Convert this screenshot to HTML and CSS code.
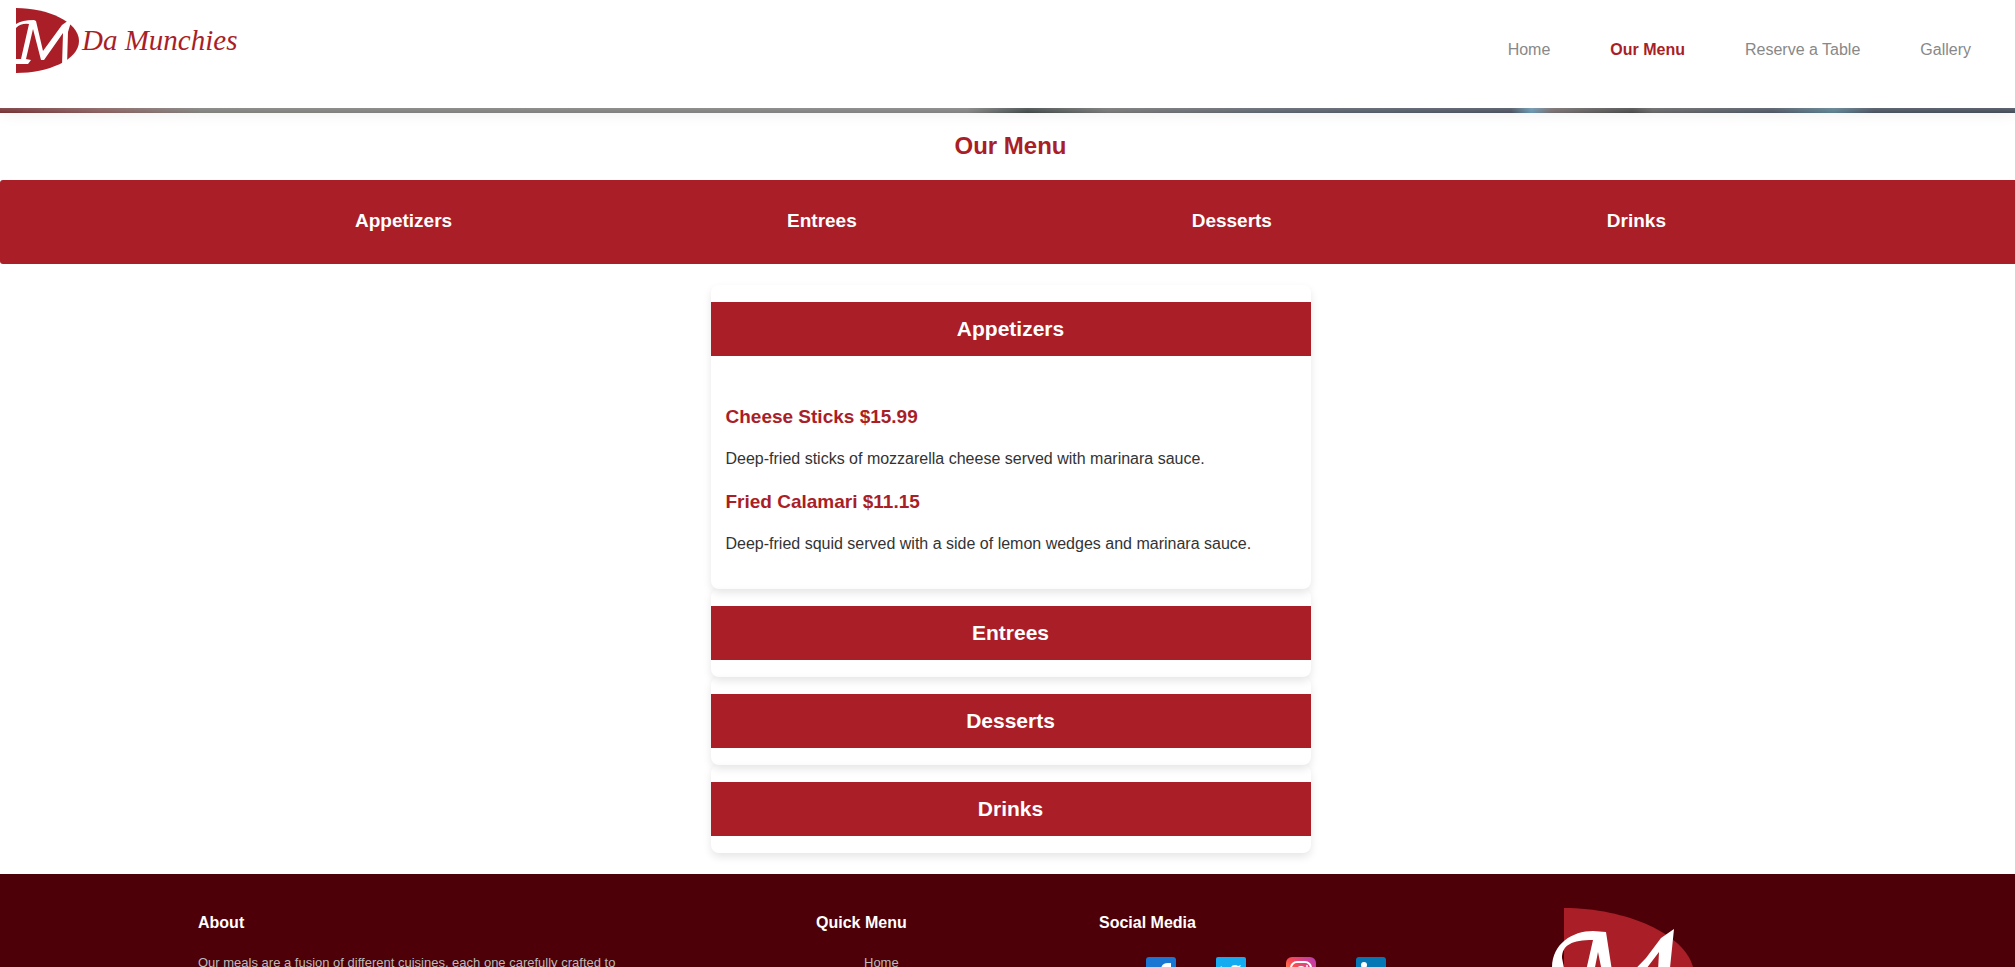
FILE: index.html
```html
<!DOCTYPE html>
<html lang="en">
<head>
<meta charset="utf-8">
<title>Da Munchies - Our Menu</title>
<link rel="stylesheet" href="styles.css">
</head>
<body>
<header class="site-header">
  <a class="brand" href="#" aria-label="Da Munchies home">
    <svg class="brand-mark" viewBox="0 0 66 68" aria-hidden="true">
      <path fill="#a91e27" d="M0 0C32 0 63 14 63 33S32 65 0 65Z"/>
      <path fill="#fff" d="M0 16Q6 12 18 12L20 13L27 43L46 17L53 12L55 14L52 24L51 58L46 58L47 25L28 52L25 52L17 21L10 51L15 52L12 56L0 56L0 51L5 51L13 16Q5 15 0 20Z"/>
    </svg>
    <span class="brand-name">Da Munchies</span>
  </a>
  <nav class="site-nav">
    <a href="#">Home</a>
    <a class="active" href="#">Our Menu</a>
    <a href="#">Reserve a Table</a>
    <a href="#">Gallery</a>
  </nav>
</header>
<div class="hero"></div>
<main class="page">
  <h1 class="page-title">Our Menu</h1>
  <nav class="menu-nav">
    <a href="#appetizers">Appetizers</a>
    <a href="#entrees">Entrees</a>
    <a href="#desserts">Desserts</a>
    <a href="#drinks">Drinks</a>
  </nav>
  <div class="cards">
    <section class="card" id="appetizers">
      <h2 class="card-title">Appetizers</h2>
      <div class="dishes">
        <article class="dish">
          <h3>Cheese Sticks $15.99</h3>
          <p>Deep-fried sticks of mozzarella cheese served with marinara sauce.</p>
        </article>
        <article class="dish">
          <h3>Fried Calamari $11.15</h3>
          <p>Deep-fried squid served with a side of lemon wedges and marinara sauce.</p>
        </article>
      </div>
    </section>
    <section class="card" id="entrees"><h2 class="card-title">Entrees</h2></section>
    <section class="card" id="desserts"><h2 class="card-title">Desserts</h2></section>
    <section class="card" id="drinks"><h2 class="card-title">Drinks</h2></section>
  </div>
</main>
<footer class="site-footer">
  <section class="about">
    <h4>About</h4>
    <p>Our meals are a fusion of different cuisines, each one carefully crafted to</p>
  </section>
  <section class="quick">
    <h4>Quick Menu</h4>
    <a href="#">Home</a>
  </section>
  <section class="social">
    <h4>Social Media</h4>
    <div class="social-links">
      <a href="#" aria-label="Facebook"><svg viewBox="0 0 30 30"><rect width="30" height="30" rx="3" fill="#1976d2"/><path fill="#fff" d="M25 6V11H23Q20 11 20 14V16H25L24 21H20V30H15V21H11V16H15V13Q15 6 22 6Z"/></svg></a>
      <a href="#" aria-label="Twitter"><svg viewBox="0 0 30 30"><rect width="30" height="30" rx="2" fill="#15abf1"/><path fill="#fff" d="M5 9Q9 13 15 13Q14 8 19 8Q21 8 22 9L25 8L24 10L26 10L24 12Q24 24 12 24Q8 24 5 22Q9 22 11 20Q8 20 7 17L9 17Q6 15 6 13Q4 11 5 9Z"/></svg></a>
      <a href="#" aria-label="Instagram"><svg viewBox="0 0 30 30"><defs><linearGradient id="insta" x1="0" y1="1" x2="1" y2="0"><stop offset="0" stop-color="#fec053"/><stop offset=".5" stop-color="#fb4c50"/><stop offset="1" stop-color="#b53ac0"/></linearGradient></defs><rect width="30" height="30" rx="6" fill="url(#insta)"/><g fill="none" stroke="#fff" stroke-width="2"><rect x="5" y="5" width="20" height="20" rx="6"/><circle cx="15" cy="15" r="5"/></g><circle cx="21" cy="9" r="1" fill="#fff"/></svg></a>
      <a href="#" aria-label="LinkedIn"><svg viewBox="0 0 30 30"><rect width="30" height="30" rx="3" fill="#0478b5"/><g fill="#fff"><circle cx="8" cy="8" r="3"/><path d="M6 12h4v13H6zM13 12h4v2q5-5 8 1v10h-4v-7q-2-5-4 0v7h-4z"/></g></svg></a>
    </div>
  </section>
  <svg class="footer-logo" viewBox="0 0 144 134" aria-hidden="true">
    <path fill="#a91e27" d="M12 0C80 0 142 31 142 67S80 134 12 134Z"/>
    <path fill="#fff" d="M54 24L63 82L94 50L109 30L122 21L118 60L120 112L103 120L107 44L66 98L57 98L46 44L34 105L0 108L4 100L26 98L41 32C20 32 10 37 10 50L12 60L0 60C0 36 20 23 41 23Z"/>
  </svg>
</footer>
</body>
</html>
```
FILE: styles.css
```css
* { box-sizing: border-box; }

body {
  margin: 0;
  height: 100vh;
  overflow: hidden;
  background: #fff;
  color: #333;
  font: 16px/18px "Liberation Sans", Arial, sans-serif;
}

h1, h2, h3, h4, p { margin: 0; }
a { color: inherit; text-decoration: none; }

.site-header {
  position: relative;
  display: flex;
  justify-content: space-between;
  align-items: flex-start;
  padding: 8px 44px 32px 16px;
  background: #fff;
  box-shadow: 0 4px 16px rgba(0, 0, 0, 0.08);
}

.brand { display: flex; align-items: flex-start; }
.brand-mark { width: 66px; height: 68px; }
.brand-name {
  padding-top: 16px;
  color: #a91e27;
  font: italic 29px/32px "Monotype Corsiva", "Apple Chancery", "Liberation Serif", serif;
}

.site-nav { display: flex; gap: 60px; padding-top: 33px; color: #888; }
.site-nav .active { color: #a91e27; font-weight: bold; }

.hero {
  height: 5px;
  background:
    linear-gradient(rgba(255, 255, 255, 0.16), rgba(255, 255, 255, 0)),
    linear-gradient(90deg, #783034 0, #8b6060 5%, #838380 10%, #858585 48%, #424a49 51%, #777 55%, #5c6470 64%, #4c5462 75%, #6b9ab5 76%, #776f70 77%, #4b4b4b 81%, #666 82%, #505866 88%, #5d8294 91%, #4a5362 93%, #454e5c 100%);
}

.page { margin-right: -6px; padding-bottom: 21px; }
.page-title {
  padding: 19px 0 20px;
  color: #a91e27;
  font-size: 24px;
  line-height: 28px;
  text-align: center;
}

.menu-nav {
  display: flex;
  justify-content: space-between;
  padding: 30px 355px 32px;
  border-radius: 3px;
  background: #a91e27;
  color: #fff;
  font-size: 19px;
  font-weight: bold;
  line-height: 22px;
}

.cards { max-width: 600px; margin: 21px auto 0; }
.card {
  padding: 17px 0;
  border-radius: 8px;
  box-shadow: 0 4px 8px rgba(0, 0, 0, 0.1);
}
.card-title {
  padding: 15px;
  background: #a91e27;
  color: #fff;
  font-size: 21px;
  line-height: 24px;
  text-align: center;
}

.dishes { display: grid; gap: 23px; padding: 50px 15px 19px; }
.dish h3 { margin-bottom: 22px; color: #a91e27; font-size: 19px; line-height: 22px; }

.site-footer {
  display: flex;
  align-items: flex-start;
  padding: 34px 198px;
  background: #4d0007;
  color: #bbb;
  font-size: 13px;
  line-height: 16px;
}
.site-footer h4 { padding-top: 6px; margin-bottom: 23px; color: #fff; font-size: 16px; line-height: 18px; }
.about { flex: 0 1 618px; }
.quick { flex: 0 1 283px; }
.quick a { display: block; padding-left: 48px; }
.social { flex: 0 1 453px; }
.social-links { display: flex; gap: 40px; padding: 2px 0 0 47px; }
.social-links svg { display: block; width: 30px; height: 30px; }
.footer-logo { flex: none; width: 144px; height: 134px; }
```
